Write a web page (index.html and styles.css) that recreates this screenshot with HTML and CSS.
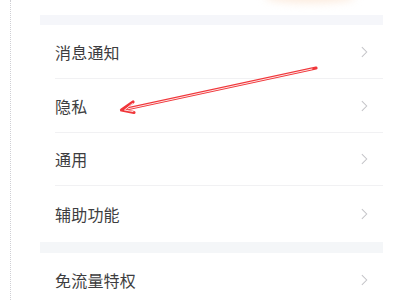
FILE: index.html
```html
<!DOCTYPE html>
<html lang="zh">
<head>
<meta charset="utf-8">
<link rel="stylesheet" href="styles.css">
</head>
<body>
<div class="page">
  <div class="rail"></div>
  <div class="content">
    <div class="top"><div class="glow"></div></div>
    <div class="band"></div>
    <div class="group">
      <div class="row r1"><span class="label">消息通知</span><svg class="chev" viewBox="0 0 8 13"><path d="M1 1 L6.5 6.5 L1 12" fill="none" stroke="#c4c4c8" stroke-width="1.2"/></svg></div>
      <div class="row r2"><span class="label">隐私</span><svg class="chev" viewBox="0 0 8 13"><path d="M1 1 L6.5 6.5 L1 12" fill="none" stroke="#c4c4c8" stroke-width="1.2"/></svg></div>
      <div class="row r3"><span class="label">通用</span><svg class="chev" viewBox="0 0 8 13"><path d="M1 1 L6.5 6.5 L1 12" fill="none" stroke="#c4c4c8" stroke-width="1.2"/></svg></div>
      <div class="row r4 last"><span class="label">辅助功能</span><svg class="chev" viewBox="0 0 8 13"><path d="M1 1 L6.5 6.5 L1 12" fill="none" stroke="#c4c4c8" stroke-width="1.2"/></svg></div>
    </div>
    <div class="band band2"></div>
    <div class="group">
      <div class="row r5 last"><span class="label">免流量特权</span><svg class="chev" viewBox="0 0 8 13"><path d="M1 1 L6.5 6.5 L1 12" fill="none" stroke="#c4c4c8" stroke-width="1.2"/></svg></div>
    </div>
  </div>
  <svg class="arrow" width="400" height="300" viewBox="0 0 400 300">
    <g fill="none" stroke-linecap="round" stroke-linejoin="round">
      <path d="M316 68 L124 109.5 M133 102 L121.5 110 L134 112.5" stroke="#f0363a" stroke-width="3.2"/>
      <path d="M312 69 L128 108.8 M132.5 103.5 L124.5 110 L133 111.5" stroke="#ffe4e4" stroke-width="1"/>
    </g>
  </svg>
</div>
</body>
</html>
```

FILE: styles.css
```css
html, body {
  margin: 0;
  padding: 0;
  background: #ffffff;
}
body {
  font-family: "Noto Sans CJK SC", "Noto Sans", sans-serif;
  width: 400px;
  height: 300px;
  overflow: hidden;
}
.page {
  position: relative;
  display: flex;
  width: 400px;
  height: 300px;
}
.rail {
  width: 10px;
  flex: none;
  border-right: 1px dotted #cfcfd4;
}
.content {
  margin-left: 29px;
  width: 343px;
  display: flex;
  flex-direction: column;
}
.content > * {
  flex: none;
}
.top {
  position: relative;
  height: 15px;
}
.glow {
  position: absolute;
  left: 225px;
  top: -10px;
  width: 90px;
  height: 13px;
  border-radius: 50%;
  background: #fcebdd;
  filter: blur(4px);
}
.band {
  height: 10px;
  background: #f5f6fa;
}
.band2 {
  height: 11px;
  background: #f4f6f8;
}
.group {
  display: flex;
  flex-direction: column;
}
.row {
  flex: none;
  display: flex;
  align-items: center;
  justify-content: space-between;
  margin-left: 15px;
  padding-right: 15px;
  border-bottom: 1px solid #f1f1f3;
  box-sizing: border-box;
}
.row.last {
  border-bottom: none;
}
.r1 { height: 54px; }
.r2 { height: 54px; }
.r3 { height: 53px; }
.r4 { height: 56px; }
.r5 { height: 54px; }
.label {
  font-size: 16px;
  color: #3d3d40;
  letter-spacing: 0.2px;
}
.chev {
  width: 7px;
  height: 12px;
}
.arrow {
  position: absolute;
  left: 0;
  top: 0;
  pointer-events: none;
}
```
